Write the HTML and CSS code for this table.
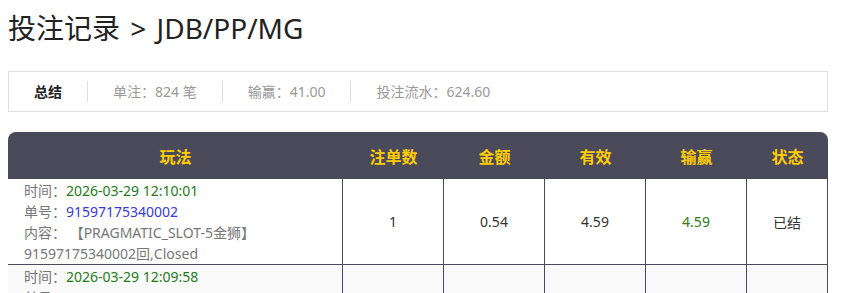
FILE: index.html
```html
<!DOCTYPE html>
<html lang="zh-CN">
<head>
<meta charset="utf-8">
<title>投注记录</title>
<link rel="stylesheet" href="styles.css">
</head>
<body>
<h1 class="page-title">投注记录 &gt; JDB/PP/MG</h1>

<div class="summary">
  <div class="summary-item summary-head">总结</div>
  <div class="summary-item">单注：824 笔</div>
  <div class="summary-item">输赢：41.00</div>
  <div class="summary-item">投注流水：624.60</div>
</div>

<div class="records">
  <div class="row head">
    <div class="cell">玩法</div>
    <div class="cell">注单数</div>
    <div class="cell">金额</div>
    <div class="cell">有效</div>
    <div class="cell">输赢</div>
    <div class="cell">状态</div>
  </div>
  <div class="row">
    <div class="cell detail">
      <div><span class="lbl">时间：</span><span class="time">2026-03-29 12:10:01</span></div>
      <div><span class="lbl">单号：</span><span class="no">91597175340002</span></div>
      <div class="lbl">内容： 【PRAGMATIC_SLOT-5金狮】91597175340002回,Closed</div>
    </div>
    <div class="cell">1</div>
    <div class="cell">0.54</div>
    <div class="cell">4.59</div>
    <div class="cell win">4.59</div>
    <div class="cell">已结</div>
  </div>
  <div class="row alt">
    <div class="cell detail">
      <div><span class="lbl">时间：</span><span class="time">2026-03-29 12:09:58</span></div>
      <div><span class="lbl">单号：</span><span class="no">91597173240002</span></div>
      <div class="lbl">内容： 【PRAGMATIC_SLOT-5金狮】91597173240002回,Closed</div>
    </div>
    <div class="cell">1</div>
    <div class="cell">0.54</div>
    <div class="cell">0.00</div>
    <div class="cell win">0.00</div>
    <div class="cell">已结</div>
  </div>
</div>
</body>
</html>
```

FILE: styles.css
```css
* { box-sizing: border-box; }

body {
  margin: 8px;
  font-family: "Noto Sans", "Noto Sans CJK SC", sans-serif;
  font-size: 14px;
  color: #333;
  background: #fff;
}

.page-title {
  margin: 0 0 23px 0;
  font-size: 28px;
  line-height: 40px;
  font-weight: 400;
  word-spacing: 3px;
  color: #222;
}

.summary {
  display: flex;
  align-items: center;
  width: 820px;
  height: 41px;
  border: 1px solid #dedede;
}

.summary-item {
  padding: 0 25px;
  line-height: 21px;
  color: #999;
  border-left: 1px solid #dedede;
}

.summary-item.summary-head {
  border-left: none;
  color: #222;
  font-weight: 700;
}

.records {
  margin-top: 20px;
  width: 820px;
}

.row {
  display: grid;
  grid-template-columns: 335px 101px 101px 101px 101px 81px;
  border-bottom: 1px solid #4b4a5a;
}

.row.alt { background: #fafafa; }

.row.head {
  height: 47px;
  background: #4b4a5a;
  border-radius: 8px 8px 0 0;
  border-bottom: none;
}

.head .cell {
  border-right: none;
  color: #ffcc00;
  font-size: 16px;
  font-weight: 700;
}

.cell {
  display: flex;
  align-items: center;
  justify-content: center;
  border-right: 1px solid #4b4a5a;
  color: #333;
}

.cell.detail {
  display: block;
  padding: 1px 16px 0 16px;
  line-height: 21px;
}

.lbl { color: #777; }
.time { color: #257a1b; }
.no { color: #3939d6; }
.win { color: #2e7d17; }
```
